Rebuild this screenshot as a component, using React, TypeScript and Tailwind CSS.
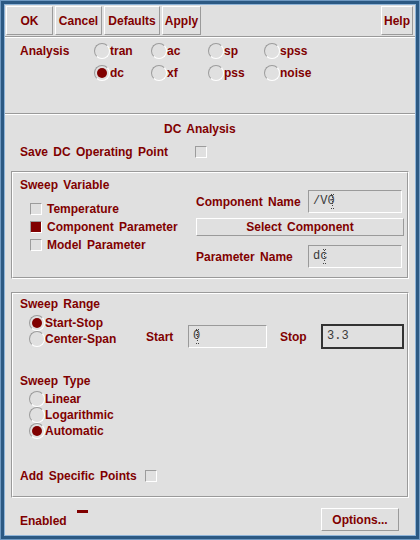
import React from "react"

const red = "text-[#800000]"

function Btn({ w, h, label, className = "" }: { w: string; h: string; label: string; className?: string }) {
  return (
    <div
      className={`${w} ${h} ${className} flex items-center justify-center border border-t-white border-l-white border-r-[#9a9a9a] border-b-[#9a9a9a] ${red} font-bold`}
    >
      {label}
    </div>
  )
}

function Radio({ on, label }: { on?: boolean; label: string }) {
  return (
    <div className="flex items-center h-[16px]">
      <span className="w-[16px] h-[16px] shrink-0 rounded-full border border-t-[#9c9c9c] border-l-[#9c9c9c] border-r-white border-b-white flex items-center justify-center">
        {on && <span className="w-[10px] h-[10px] rounded-full bg-[#800000]" />}
      </span>
      <span className={`${red} font-bold leading-[16px]`}>{label}</span>
    </div>
  )
}

function Check({ on }: { on?: boolean }) {
  return (
    <span className="w-[12px] h-[12px] shrink-0 border border-t-[#9c9c9c] border-l-[#9c9c9c] border-r-white border-b-white flex">
      {on && <span className="flex-1 bg-[#800000]" />}
    </span>
  )
}

function Cursor() {
  return (
    <svg width="7" height="16" viewBox="0 0 7 16" className="-ml-[6px] shrink-0">
      <line x1="3.5" y1="2" x2="3.5" y2="14" stroke="#444" strokeWidth="1" strokeDasharray="1 1" />
      <rect x="2" y="1" width="1" height="1" fill="#444" />
      <rect x="4" y="1" width="1" height="1" fill="#444" />
      <rect x="2" y="15" width="1" height="1" fill="#444" />
      <rect x="4" y="15" width="1" height="1" fill="#444" />
    </svg>
  )
}

function Field({ w, value, cursor, focus }: { w: string; value: string; cursor?: boolean; focus?: boolean }) {
  const border = focus
    ? "h-[25px] border-2 border-[#333333]"
    : "h-[23px] border border-t-[#9a9a9a] border-l-[#9a9a9a] border-r-white border-b-white"
  return (
    <div className={`${w} ${border} flex items-start pl-[4px] pt-[2px] text-[#3a3a3a] font-['Liberation_Mono',monospace] text-[12px] leading-[16px] [word-spacing:0px]`}>
      <span>{value}</span>
      {cursor && <Cursor />}
    </div>
  )
}

function Etched({ className = "", children }: { className?: string; children: React.ReactNode }) {
  return (
    <div className={`border border-t-[#9a9a9a] border-l-[#9a9a9a] border-r-white border-b-white ${className}`}>
      <div className="h-full border border-t-white border-l-white border-r-[#9a9a9a] border-b-[#9a9a9a]">
        {children}
      </div>
    </div>
  )
}

function Sep() {
  return <div className="h-[2px] border-t border-t-[#9a9a9a] border-b border-b-white" />
}

export default function App() {
  return (
    <div className="w-[420px] h-[540px] border border-[#6f99c2] bg-[#2c5983] font-['Liberation_Sans',Arial,sans-serif] text-[12px] [word-spacing:2px]">
      <div className="w-full h-full border-[3px] border-[#2c5983]">
        <div className="w-full h-full border border-[#8fb4d8] bg-[#e0e0e0] flex flex-col">
          {/* button bar */}
          <div className="h-[31px] flex items-start pt-[1px] pl-[1px] pr-[2px]">
            <div className="flex gap-[2px]">
              <Btn w="w-[47px]" h="h-[29px]" label="OK" />
              <Btn w="w-[47px]" h="h-[29px]" label="Cancel" />
              <Btn w="w-[56px]" h="h-[29px]" label="Defaults" />
              <Btn w="w-[39px]" h="h-[29px]" label="Apply" />
            </div>
            <Btn w="w-[32px]" h="h-[29px]" label="Help" className="ml-auto" />
          </div>
          <Sep />

          {/* analysis */}
          <div className="h-[75px] flex items-start pt-[5px] pl-[15px]">
            <div className={`w-[74px] ${red} font-bold leading-[16px]`}>Analysis</div>
            <div className="grid grid-cols-[57px_57px_56px_80px] gap-y-[6px]">
              <Radio label="tran" />
              <Radio label="ac" />
              <Radio label="sp" />
              <Radio label="spss" />
              <Radio label="dc" on />
              <Radio label="xf" />
              <Radio label="pss" />
              <Radio label="noise" />
            </div>
          </div>
          <Sep />

          <div className={`mt-[6px] ml-[159px] ${red} font-bold leading-[16px]`}>DC Analysis</div>
          <div className="mt-[7px] pl-[15px] flex items-center h-[16px]">
            <span className={`w-[175px] ${red} font-bold`}>Save DC Operating Point</span>
            <Check />
          </div>

          {/* sweep variable */}
          <Etched className="mt-[11px] ml-[6px] w-[398px] h-[108px]">
            <div className="flex">
              <div className="w-[183px] pl-[7px] pt-[4px]">
                <div className={`${red} font-bold leading-[16px]`}>Sweep Variable</div>
                <div className="mt-[7px] flex flex-col">
                  {[
                    ["Temperature", false],
                    ["Component Parameter", true],
                    ["Model Parameter", false],
                  ].map(([label, on]) => (
                    <div key={label as string} className="h-[18px] flex items-center pl-[10px] gap-[5px]">
                      <Check on={on as boolean} />
                      <span className={`${red} font-bold`}>{label as string}</span>
                    </div>
                  ))}
                </div>
              </div>
              <div className="w-[208px] pt-[17px] flex flex-col">
                <div className="flex items-center h-[23px]">
                  <span className={`w-[112px] ${red} font-bold`}>Component Name</span>
                  <Field w="w-[94px]" value="/V0" cursor />
                </div>
                <Btn w="w-[208px]" h="h-[18px] mt-[5px]" label="Select Component" />
                <div className="flex items-center h-[23px] mt-[9px]">
                  <span className={`w-[112px] ${red} font-bold`}>Parameter Name</span>
                  <Field w="w-[94px]" value="dc" cursor />
                </div>
              </div>
            </div>
          </Etched>

          {/* sweep range */}
          <Etched className="mt-[13px] ml-[6px] w-[398px] h-[206px]">
            <div className="pl-[7px] pt-[2px] flex flex-col">
              <div className={`${red} font-bold leading-[16px]`}>Sweep Range</div>
              <div className="mt-[3px] flex items-start">
                <div className="w-[126px] pl-[9px] flex flex-col">
                  <Radio label="Start-Stop" on />
                  <Radio label="Center-Span" />
                </div>
                <div className="mt-[10px] flex items-center h-[23px]">
                  <span className={`w-[42px] ${red} font-bold`}>Start</span>
                  <Field w="w-[79px]" value="0" cursor />
                  <span className={`ml-[13px] w-[41px] ${red} font-bold`}>Stop</span>
                  <Field w="w-[83px]" value="3.3" focus />
                </div>
              </div>

              <div className={`mt-[25px] ${red} font-bold leading-[16px]`}>Sweep Type</div>
              <div className="mt-[2px] pl-[9px] flex flex-col">
                <Radio label="Linear" />
                <Radio label="Logarithmic" />
                <Radio label="Automatic" on />
              </div>

              <div className="mt-[29px] flex items-center h-[16px]">
                <span className={`w-[125px] ${red} font-bold`}>Add Specific Points</span>
                <Check />
              </div>
            </div>
          </Etched>

          {/* bottom */}
          <div className="flex-1 flex items-start pl-[15px] pr-[16px]">
            <span className={`mt-[15px] ${red} font-bold leading-[16px]`}>Enabled</span>
            <span className="mt-[12px] ml-[10px] w-[11px] h-[3px] bg-[#800000]" />
            <Btn w="w-[78px]" h="h-[23px] mt-[10px]" label="Options..." className="ml-auto" />
          </div>
        </div>
      </div>
    </div>
  )
}
